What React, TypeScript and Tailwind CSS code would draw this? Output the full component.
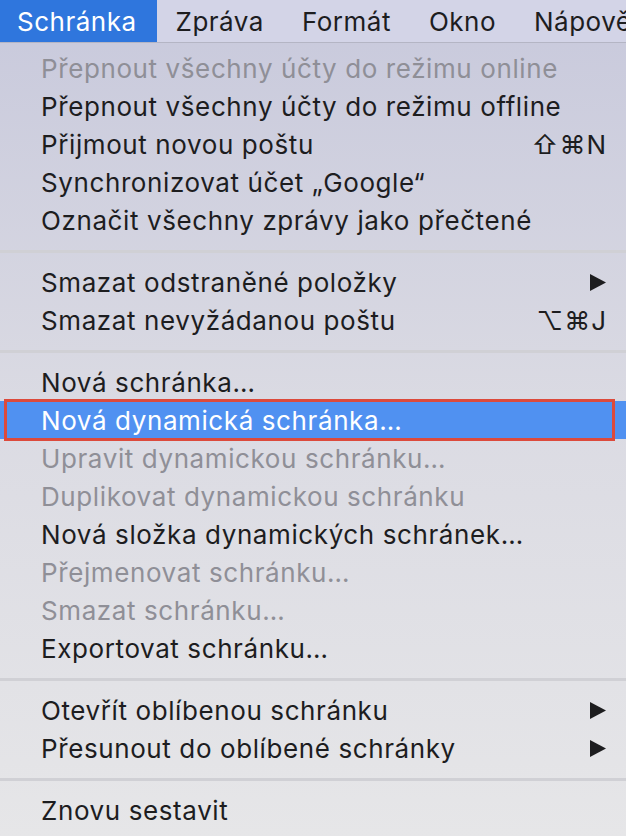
import React from "react";

type Item =
  | { sep: true }
  | { label: string; disabled?: boolean; shortcut?: string; submenu?: boolean; active?: boolean };

const items: Item[] = [
  { label: "Přepnout všechny účty do režimu online", disabled: true },
  { label: "Přepnout všechny účty do režimu offline" },
  { label: "Přijmout novou poštu", shortcut: "⇧⌘N" },
  { label: "Synchronizovat účet „Google“" },
  { label: "Označit všechny zprávy jako přečtené" },
  { sep: true },
  { label: "Smazat odstraněné položky", submenu: true },
  { label: "Smazat nevyžádanou poštu", shortcut: "⌥⌘J" },
  { sep: true },
  { label: "Nová schránka…" },
  { label: "Nová dynamická schránka…", active: true },
  { label: "Upravit dynamickou schránku…", disabled: true },
  { label: "Duplikovat dynamickou schránku", disabled: true },
  { label: "Nová složka dynamických schránek…" },
  { label: "Přejmenovat schránku…", disabled: true },
  { label: "Smazat schránku…", disabled: true },
  { label: "Exportovat schránku…" },
  { sep: true },
  { label: "Otevřít oblíbenou schránku", submenu: true },
  { label: "Přesunout do oblíbené schránky", submenu: true },
  { sep: true },
  { label: "Znovu sestavit" },
];

const bar = ["Schránka", "Zpráva", "Formát", "Okno", "Nápověda"];

export default function App() {
  return (
    <div
      className="w-[626px] h-[836px] overflow-hidden bg-gradient-to-b from-[#c8c9dc] via-[#dbdbe3] to-[#e6e6e8] text-[#1d1d1f]"
      style={{ fontFamily: "Inter, 'Liberation Sans', sans-serif" }}
    >
      {/* Menu bar */}
      <div className="flex h-[43px] items-center bg-[#d3d4e7] border-b border-[#b4b5c4] text-[26px] tracking-[0.5px] whitespace-nowrap">
        {bar.map((b, i) => (
          <div
            key={b}
            className={
              i === 0
                ? "h-full flex items-center pl-[17px] pr-[20px] bg-[#2f76dd] text-white"
                : "h-full flex items-center px-[19px] shrink-0"
            }
          >
            {b}
          </div>
        ))}
      </div>

      {/* Dropdown */}
      <div className="flex flex-col pt-[6px] text-[26px] tracking-[0.6px]">
        {items.map((it, i) =>
          "sep" in it ? (
            <div key={i} className="h-[24px] flex items-center">
              <div className="w-full h-[3px] bg-[#d0d0d5]" />
            </div>
          ) : (
            <div
              key={i}
              className={
                "relative h-[38px] flex items-center pl-[41px] pr-[19px] whitespace-nowrap " +
                (it.active ? "bg-[#5091f1] text-white" : it.disabled ? "text-[#8f8f97]" : "")
              }
            >
              <span className="flex-1">{it.label}</span>
              {it.shortcut && <span className="tracking-[1px]">{it.shortcut}</span>}
              {it.submenu && (
                <svg width="17" height="17" viewBox="0 0 17 17" className="mr-[1px]">
                  <path d="M1 0 L17 8.5 L1 17 Z" fill="#1d1d1f" />
                </svg>
              )}
              {it.active && (
                <div className="absolute left-[4px] right-[11px] top-[-2px] bottom-[-2px] border-[3px] border-[#dc4a3c]" />
              )}
            </div>
          )
        )}
      </div>
    </div>
  );
}
